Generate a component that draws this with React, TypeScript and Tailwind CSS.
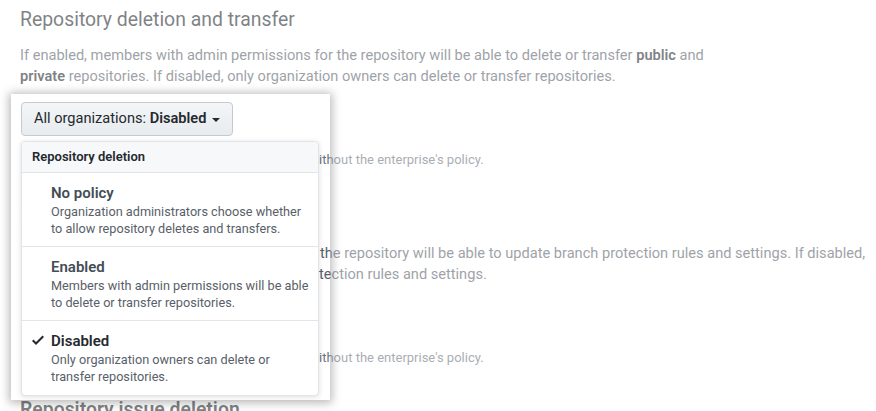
import { ReactNode } from "react";

function CheckIcon() {
    return (
        <svg width="12" height="16" viewBox="0 0 12 16" className="fill-[#24292e]">
            <path d="M12 5l-8 8-4-4 1.5-1.5L4 10l6.5-6.5L12 5z" />
        </svg>
    );
}

function MenuItem({ title, children, selected = false, last = false }: { title: string; children: ReactNode; selected?: boolean; last?: boolean }) {
    return (
        <div className={`flex h-[74px] py-[10px] pr-[10px] ${last ? "" : "border-b border-[#e1e4e8]"}`}>
            <div className="w-[29px] flex-none pl-[10px] pt-[1px]">{selected && <CheckIcon />}</div>
            <div>
                <div className={`text-[15px] leading-[20px] font-semibold ${selected ? "text-[#24292e]" : "text-[#444d56]"}`}>{title}</div>
                <div className="whitespace-nowrap text-[12.7px] leading-[17px] text-[#586069]">{children}</div>
            </div>
        </div>
    );
}

export default function App() {
    return (
        <div className="relative h-[411px] w-[876px] overflow-hidden bg-white font-['Roboto','Liberation_Sans',sans-serif]">

            {/* Page behind the highlight */}
            <div className="px-5 pt-[7px]">
                <h2 className="text-[19.4px] leading-[26px] text-[#24292e]">Repository deletion and transfer</h2>
                <p className="mt-[12px] whitespace-nowrap text-[14.6px] leading-[21px] text-[#586069]">
                    If enabled, members with admin permissions for the repository will be able to delete or transfer <b className="font-semibold text-[#24292e]">public</b> and
                    <br />
                    <b className="font-semibold text-[#24292e]">private</b> repositories. If disabled, only organization owners can delete or transfer repositories.
                </p>
                <button className="ml-px mt-[15px] flex h-[34px] items-center gap-[6px] rounded-[4px] border border-[#c7cacd] bg-gradient-to-b from-[#f3f5f7] to-[#e8ecef] px-[12px] text-[14.6px] text-[#24292e]">
                    <span>
                        All organizations: <b className="font-semibold">Disabled</b>
                    </span>
                    <span className="mt-px border-x-[4px] border-t-[4px] border-x-transparent border-t-[#24292e]" />
                </button>
                <p className="mt-[15px] pl-[299px] text-[13px] leading-[18px] text-[#6a737d]">ithout the enterprise's policy.</p>

                <h2 className="mt-[36px] text-[19.4px] leading-[26px] text-[#24292e]">Branch protection</h2>
                <p className="mt-[12px] whitespace-nowrap pl-[300px] text-[14.6px] leading-[21px] text-[#586069]">
                    the repository will be able to update branch protection rules and settings. If disabled,
                    <br />
                    <span className="-ml-px">tection rules and settings.</span>
                </p>
                <button className="ml-px mt-[15px] flex h-[34px] items-center rounded-[4px] border border-[#c7cacd] bg-[#eff3f6] px-[12px] text-[14.6px] text-[#24292e]">
                    All organizations: No policy
                </button>
                <p className="mt-[15px] pl-[299px] text-[13px] leading-[18px] text-[#6a737d]">ithout the enterprise's policy.</p>

                <h2 className="mt-[30px] text-[19.4px] leading-[26px] font-semibold text-[#24292e]">Repository issue deletion</h2>
            </div>

            {/* Highlight: fades everything around it */}
            <div className="absolute left-[11px] top-[94px] h-[306px] w-[319px] shadow-[0_1px_9px_2px_rgba(0,0,0,0.28),0_0_0_9999px_rgba(255,255,255,0.42)]" />

            {/* Open select menu */}
            <div className="absolute left-[21px] top-[141px] w-[298px] overflow-hidden rounded-[4px] border border-[#e1e4e8] bg-white shadow-[0_1px_5px_rgba(27,31,35,0.15)]">
                <div className="h-[31px] border-b border-[#e1e4e8] bg-[#f6f8fa] pl-[10px] text-[13px] font-semibold leading-[30px] text-[#24292e]">
                    Repository deletion
                </div>
                <MenuItem title="No policy">
                    Organization administrators choose whether
                    <br />
                    to allow repository deletes and transfers.
                </MenuItem>
                <MenuItem title="Enabled">
                    Members with admin permissions will be able
                    <br />
                    to delete or transfer repositories.
                </MenuItem>
                <MenuItem title="Disabled" selected last>
                    Only organization owners can delete or
                    <br />
                    transfer repositories.
                </MenuItem>
            </div>
        </div>
    );
}
